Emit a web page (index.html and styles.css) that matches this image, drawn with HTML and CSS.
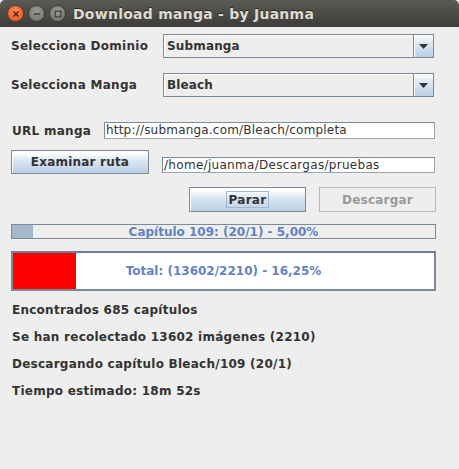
FILE: index.html
```html
<!DOCTYPE html>
<html>
<head>
<meta charset="utf-8">
<link rel="stylesheet" href="styles.css">
</head>
<body>
<div class="titlebar">
  <div class="wbtns">
    <span class="wb close"><svg width="8" height="8" viewBox="0 0 8 8"><path d="M1.5 1.5L6.5 6.5M6.5 1.5L1.5 6.5" stroke="#4a2010" stroke-width="1.4"/></svg></span>
    <span class="wb"><svg width="8" height="8" viewBox="0 0 8 8"><path d="M1 4H7" stroke="#3c3b37" stroke-width="1.4"/></svg></span>
    <span class="wb"><svg width="8" height="8" viewBox="0 0 8 8"><rect x="1.2" y="1.2" width="5.6" height="5.6" fill="none" stroke="#3c3b37" stroke-width="1.2"/></svg></span>
  </div>
  <div class="title">Download manga - by Juanma</div>
</div>
<div class="content">
  <div class="row r-dom">
    <span class="lbl lbl-wide">Selecciona Dominio</span>
    <div class="combo">
      <div class="combo-val">Submanga</div>
      <div class="combo-btn"><svg width="9" height="5" viewBox="0 0 9 5"><path d="M0 0H9L4.5 5Z" fill="#333"/></svg></div>
    </div>
  </div>
  <div class="row r-manga">
    <span class="lbl lbl-wide">Selecciona Manga</span>
    <div class="combo">
      <div class="combo-val">Bleach</div>
      <div class="combo-btn"><svg width="9" height="5" viewBox="0 0 9 5"><path d="M0 0H9L4.5 5Z" fill="#333"/></svg></div>
    </div>
  </div>
  <div class="row r-url">
    <span class="lbl lbl-url">URL manga</span>
    <div class="field">http://submanga.com/Bleach/completa</div>
  </div>
  <div class="row r-path">
    <button class="btn btn-exam">Examinar ruta</button>
    <div class="field field-path">/home/juanma/Descargas/pruebas</div>
  </div>
  <div class="row r-actions">
    <button class="btn btn-act"><span class="focus">Parar</span></button>
    <button class="btn btn-act disabled">Descargar</button>
  </div>
  <div class="progress p-small">
    <div class="pfill" style="width:21px"></div>
    <div class="ptext">Capítulo 109: (20/1) - 5,00%</div>
  </div>
  <div class="progress p-big">
    <div class="pfill red" style="width:63px"></div>
    <div class="ptext">Total: (13602/2210) - 16,25%</div>
  </div>
  <div class="status">
    <div class="sline">Encontrados 685 capítulos</div>
    <div class="sline">Se han recolectado 13602 imágenes (2210)</div>
    <div class="sline">Descargando capítulo Bleach/109 (20/1)</div>
    <div class="sline">Tiempo estimado: 18m 52s</div>
  </div>
</div>
</body>
</html>
```
FILE: styles.css
```css
html, body {
  margin: 0;
  padding: 0;
  background: #eeeeee;
  width: 459px;
  height: 469px;
  overflow: hidden;
  font-family: "DejaVu Sans", sans-serif;
}
.titlebar {
  height: 27px;
  background: linear-gradient(#5b5a54, #3d3c38);
  display: flex;
  align-items: center;
  border-radius: 5px 5px 0 0;
}
.wbtns {
  display: flex;
  gap: 4px;
  padding-left: 7px;
  width: 66px;
}
.wb {
  width: 15px;
  height: 15px;
  border-radius: 50%;
  background: radial-gradient(circle at 50% 35%, #9a9992, #6f6e69);
  border: 1px solid #3a3935;
  display: flex;
  align-items: center;
  justify-content: center;
  box-sizing: content-box;
}
.wb.close {
  background: radial-gradient(circle at 50% 35%, #f78a5c, #e0521f);
  border-color: #7a3418;
}
.title {
  color: #dfdbd2;
  font-weight: bold;
  font-size: 14px;
  letter-spacing: 0.25px;
  text-shadow: 0 -1px 0 #2a2925;
}
.content {
  padding: 0 24px 0 11px;
  display: flex;
  flex-direction: column;
}
.row {
  display: flex;
  align-items: center;
}
.lbl {
  font-weight: bold;
  font-size: 12px;
  color: #333333;
  letter-spacing: 0.28px;
}
.lbl-wide { width: 152px; flex: none; }
.lbl-url { width: 92px; flex: none; padding-left: 1px; }
.r-dom { margin-top: 7px; height: 24px; }
.r-manga { margin-top: 15px; height: 24px; }
.combo {
  flex: 1;
  height: 24px;
  box-sizing: border-box;
  border: 1px solid #7a8a99;
  display: flex;
  background: #eeeeee;
  margin-right: 1px;
}
.combo-val {
  flex: 1;
  box-shadow: inset 1px 1px 0 #ffffff;
  font-weight: bold;
  font-size: 12px;
  color: #333333;
  padding-left: 3px;
  display: flex;
  align-items: center;
  letter-spacing: 0.15px;
}
.combo-btn {
  width: 19px;
  border-left: 1px solid #7a8a99;
  background: linear-gradient(#ffffff 0%, #dde8f3 35%, #b8cfe5 100%);
  box-shadow: inset 1px 1px 0 #ffffff;
  display: flex;
  align-items: center;
  justify-content: center;
}
.r-url { margin-top: 25px; height: 17px; }
.field {
  flex: 1;
  height: 17px;
  box-sizing: border-box;
  border: 1px solid #7a8a99;
  border-right-color: #9aa6b2;
  border-bottom-color: #9aa6b2;
  background: #ffffff;
  font-size: 12px;
  color: #333333;
  padding-left: 1px;
  line-height: 15px;
  white-space: nowrap;
  overflow: hidden;
  letter-spacing: 0.2px;
}
.r-path { margin-top: 11px; height: 24px; align-items: flex-start; }
.btn {
  font-family: "DejaVu Sans", sans-serif;
  font-weight: bold;
  font-size: 12px;
  color: #333333;
  border: 1px solid #7a8a99;
  background: linear-gradient(#ffffff 0%, #ffffff 10%, #dde8f3 40%, #b8cfe5 100%);
  box-shadow: inset 1px 1px 0 #ffffff;
  padding: 0;
  margin: 0;
  border-radius: 0;
  letter-spacing: 0.2px;
}
.btn-exam { width: 138px; height: 24px; flex: none; }
.field-path { margin-left: 13px; margin-top: 7px; height: 16px; line-height: 14px; letter-spacing: 0.3px; }
.r-actions {
  margin-top: 13px;
  height: 25px;
  justify-content: flex-end;
  gap: 13px;
  margin-right: -1px;
}
.btn-act { width: 117px; height: 25px; }
.btn-act.disabled {
  background: #eeeeee;
  border-color: #b8b8b8;
  box-shadow: none;
  color: #999999;
}
.focus {
  border: 1px solid #a3b8cc;
  padding: 1px 1px 0 1px;
  letter-spacing: 0.3px;
}
.progress {
  position: relative;
  box-sizing: border-box;
  border: 1px solid #7a8a99;
  display: flex;
  align-items: stretch;
  margin-right: -1px;
}
.p-small {
  margin-top: 12px;
  height: 15px;
  background: #eeeeee;
}
.p-big {
  margin-top: 12px;
  height: 40px;
  background: #ffffff;
  border: 2px solid #7a8a99;
  border-top-color: #6d7e93;
}
.pfill { background: #a3b8cc; }
.pfill.red { background: #ff0000; }
.ptext {
  position: absolute;
  inset: 0;
  display: flex;
  align-items: center;
  justify-content: center;
  font-weight: bold;
  font-size: 12px;
  color: #6382bf;
}
.status {
  margin-top: 6px;
  display: flex;
  flex-direction: column;
}
.sline {
  font-weight: bold;
  font-size: 12px;
  color: #333333;
  line-height: 27px;
  padding-left: 1px;
  letter-spacing: 0.25px;
}
```
